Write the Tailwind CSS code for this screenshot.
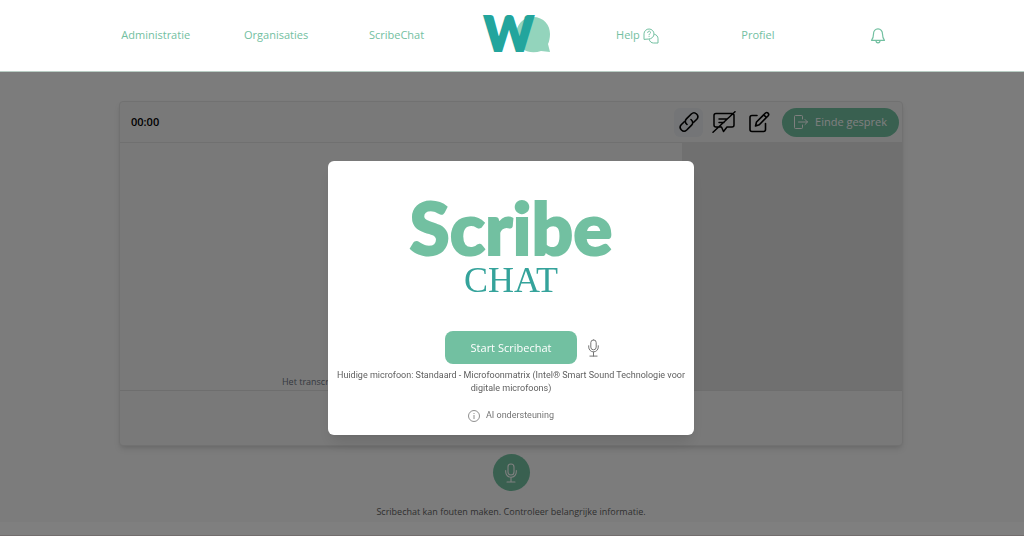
<!DOCTYPE html>
<html lang="nl">

<head>
    <meta charset="UTF-8" />
    <meta name="viewport" content="width=device-width, initial-scale=1.0" />
    <title>ScribeChat</title>
    <script src="https://cdn.jsdelivr.net/npm/@tailwindcss/browser@4"></script>
</head>

<body class="min-h-screen flex flex-col bg-white font-['Open_Sans','Noto_Sans',sans-serif] text-[11px]">

    <!-- Navigatie -->
    <header class="relative z-20 h-[72px] bg-white border-b border-[#b9cdc4]">
        <nav class="h-full w-full max-w-[843px] mx-auto grid grid-cols-7 items-center justify-items-center translate-x-[5px] text-[#72c0a1]">
            <a href="#">Administratie</a>
            <a href="#">Organisaties</a>
            <a href="#">ScribeChat</a>
            <a href="#" aria-label="Home">
                <svg class="w-[68px] h-[38px] overflow-visible" viewBox="0 0 68 38">
                    <path d="M50 0C61 0 67 8 67 17C67 21 66 25 65 27L67 35L58 34C47 38 33 33 33 18C33 8 40 0 50 0Z" fill="#93d4bc" />
                    <text x="1" y="34" font-family="Lato" font-weight="900" font-size="47" fill="#23a59d" stroke="#23a59d" stroke-width="2">W</text>
                </svg>
            </a>
            <a href="#" class="flex items-center gap-[3px]">Help
                <svg class="size-4" viewBox="0 0 16 16" fill="none" stroke="currentColor" stroke-linecap="round" stroke-linejoin="round">
                    <path d="M1 11V5.800A5 5 0 1 1 6 11Z" />
                    <path d="M4.700 4.500C4.700 2.600 7.500 2.600 7.500 4.500C7.500 5.600 6.100 5.500 6.100 6.800M6.100 8.500V8.600M11.600 6.300C13.700 6.700 15 8.600 15 10.700V15H10.500C8.500 15 6.600 13.600 6.200 11.500" />
                </svg>
            </a>
            <a href="#">Profiel</a>
            <button type="button" aria-label="Meldingen">
                <svg class="size-4" viewBox="0 0 16 16" fill="none" stroke="currentColor" stroke-width="1.2" stroke-linejoin="round">
                    <path d="M8 .8C5.300 .8 3.500 3 3.500 6C3.500 9.500 3 10.500 1.500 12.300H14.500C13 10.500 12.500 9.500 12.500 6C12.500 3 10.700.8 8 .8ZM6 12.500C6 15.700 10 15.700 10 12.500" />
                </svg>
            </button>
        </nav>
    </header>

    <!-- Gesprek -->
    <main class="flex-1 bg-[#f8f8f8] pt-[29px] px-4 flex flex-col items-center">
        <section class="w-full max-w-[784px] -translate-x-px rounded border border-[#e2e2e2] bg-[#f3f3f3] shadow-md overflow-hidden">
            <div class="h-[41px] pl-[11px] pr-[3px] flex items-center justify-between border-b border-[#e0e0e0]">
                <span class="font-semibold text-black">00:00</span>
                <div class="flex items-center">
                    <button type="button" aria-label="Link kopiëren" class="size-[29px] rounded-md bg-[#e8ebee] flex items-center justify-center">
                        <svg class="size-[22px]" viewBox="0 0 22 22" fill="none" stroke="black" stroke-width="1.6" stroke-linecap="round" stroke-linejoin="round">
                            <path d="M9 13.500C6.700 11.500 7 9.300 8.400 7.900L13.300 3C16.900-.4 21.900 4.700 18.800 8.200L15.700 11.300" />
                            <path d="M13 8.500C15.300 10.500 15 12.700 13.600 14.100L8.700 19C5.100 22.400.1 17.300 3.200 13.800L6.300 10.700" />
                        </svg>
                    </button>
                    <button type="button" aria-label="Ondertiteling uit" class="ml-[9px]">
                        <svg class="w-6 h-[22px]" viewBox="0 0 24 22" fill="none" stroke="black" stroke-width="1.500" stroke-linecap="round" stroke-linejoin="round">
                            <path d="M4 2.500H20Q22 2.500 22 4.500V14Q22 16 20 16H15L11.500 20.500L9.500 16H4Q2 16 2 14V4.500Q2 2.500 4 2.500ZM7 8H15M7 11.500H12M1 21.300L23 .7" />
                        </svg>
                    </button>
                    <button type="button" aria-label="Bewerken" class="ml-3">
                        <svg class="size-[22px]" viewBox="0 0 22 22" fill="none" stroke="black" stroke-width="1.600" stroke-linecap="round" stroke-linejoin="round">
                            <path d="M9 4.500H4Q2 4.500 2 6.500V18.500Q2 20.500 4 20.500H15.500Q17.500 20.500 17.500 18.500V12.500" />
                            <path d="M7.500 15L8.500 11L17.500 2C19.200.6 21.700 2.900 20.200 4.700L11.300 13.700ZM15.700 3.800L18.500 6.500" />
                        </svg>
                    </button>
                    <button type="button" class="ml-3 h-[29px] px-3 rounded-full bg-[#72c0a1] text-white flex items-center gap-[7px]">
                        <svg class="size-[14px]" viewBox="0 0 14 14" fill="none" stroke="currentColor" stroke-linecap="round" stroke-linejoin="round">
                            <path d="M8.500 4V1.500Q8.500.5 7.500.5H1.500Q.5.5.5 1.500V12.500Q.5 13.500 1.500 13.500H7.500Q8.500 13.500 8.500 12.500V10M4.500 7H13.500M11 4.500L13.500 7L11 9.500" />
                        </svg>
                        Einde gesprek
                    </button>
                </div>
            </div>
            <div class="h-[248px] flex border-b border-[#dcdcdc]">
                <div class="flex-1 flex items-end justify-center pb-[2px] text-[9px] leading-[13px] text-[#6b7280]">Het transcript verschijnt hier zodra het gesprek is gestart</div>
                <div class="w-[220px] bg-[#e0e0e0]"></div>
            </div>
            <div class="h-[54px]"></div>
        </section>

        <button type="button" aria-label="Microfoon" class="mt-2 size-[37px] rounded-full bg-[#72c0a1] text-white flex items-center justify-center -translate-x-px">
            <svg class="w-3 h-5" viewBox="0 0 12 20" fill="none" stroke="currentColor" stroke-width="1.1" stroke-linecap="round">
                <rect x="3" y="1" width="6" height="11" rx="3" />
                <path d="M.7 7.500V9A5.300 5.300 0 0 0 11.300 9V7.500M6 14.500V19M2 19H10" />
            </svg>
        </button>
        <p class="mt-[14px] text-[9px] leading-[13px] text-[#5f5f5f] -translate-x-px">Scribechat kan fouten maken. Controleer belangrijke informatie.</p>
    </main>
    <footer class="h-[14px] bg-white border-b border-[#e5dada]"></footer>

    <!-- Startvenster -->
    <div class="fixed inset-0 z-10 bg-black/50 pt-[60px] pr-[2px] flex items-center justify-center">
        <div role="dialog" aria-label="Scribe Chat" class="w-[366px] h-[274px] rounded-md bg-white shadow-lg flex flex-col items-center pt-[33px] text-[9px] leading-[13px] text-[#737373]">
            <div class="h-[137px] flex flex-col items-center">
                <span class="font-['Lato'] font-black text-[73px] leading-[66px] text-[#72c0a1] [-webkit-text-stroke:2px_#72c0a1]">Scribe</span>
                <span class="font-['Liberation_Serif'] text-[36px] leading-[40px] text-[#35a39b]">CHAT</span>
            </div>
            <div class="w-full grid grid-cols-[1fr_auto_1fr] items-center">
                <button type="button" class="col-start-2 w-[132px] h-[33px] rounded-lg bg-[#72c0a1] text-[11px] text-white">Start Scribechat</button>
                <button type="button" aria-label="Microfoon kiezen" class="ml-[11px] w-3">
                    <svg class="w-[11px] h-[18px]" viewBox="0 0 12 20" fill="none" stroke="currentColor" stroke-width="1.1" stroke-linecap="round">
                        <rect x="3" y="1" width="6" height="11" rx="3" />
                        <path d="M.7 7.500V9A5.300 5.300 0 0 0 11.300 9V7.500M6 14.500V19M2 19H10" />
                    </svg>
                </button>
            </div>
            <p class="mt-[5px] px-2 text-center font-['Roboto'] text-[#5f5f5f]">Huidige microfoon: Standaard - Microfoonmatrix (Intel® Smart Sound Technologie voor digitale microfoons)</p>
            <button type="button" class="mt-[14px] flex items-center gap-[6px] font-['Roboto']">
                <svg class="size-3" viewBox="0 0 12 12" fill="none" stroke="currentColor" stroke-width="0.800">
                    <circle cx="6" cy="6" r="5.500" />
                    <path d="M6 5V9M6 3V4" />
                </svg>
                AI ondersteuning
            </button>
        </div>
    </div>
</body>

</html>
